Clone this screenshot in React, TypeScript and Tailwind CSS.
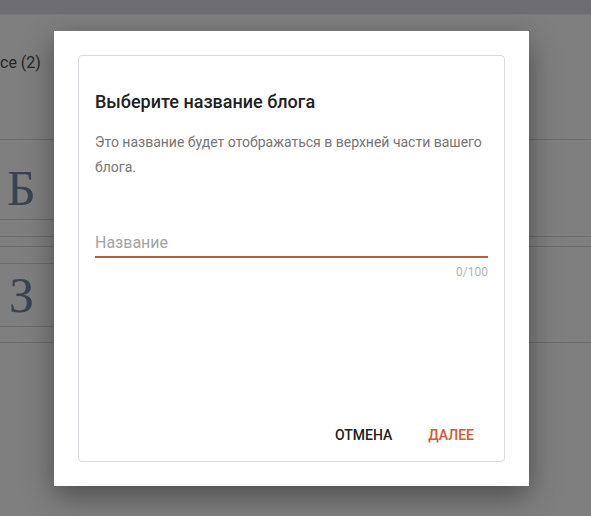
import React from "react";

const roboto = { fontFamily: "Roboto, 'Noto Sans', sans-serif" };

function Backdrop() {
  return (
    <div className="w-full">
      <div className="h-[14px] bg-[#6e6e72]" />
      <div className="h-px bg-[#7a7a7a]" />
      <div className="h-[124px] pt-[38px]">
        <span className="block whitespace-nowrap text-[16px] leading-[20px] text-[#262626]">
          ce (2)
        </span>
      </div>
      <div className="h-[97px] border-t border-[#6c6c6c]">
        <div className="w-[260px] h-[80px] border-b border-[#6c6c6c] pt-[23px] pl-[7px]">
          <span
            className="block text-[50px] leading-[50px] text-[#3a4350]"
            style={{ fontFamily: "'Liberation Serif', serif" }}
          >
            Б
          </span>
        </div>
      </div>
      <div className="h-[10px] border-t border-[#6c6c6c]" />
      <div className="h-[97px] border-t border-b border-[#6c6c6c]">
        <div className="w-[260px] mt-[16px] h-[64px] border-t border-b border-[#6c6c6c] pt-[6px] pl-[9px]">
          <span
            className="block text-[50px] leading-[50px] text-[#3a4350]"
            style={{ fontFamily: "'Liberation Serif', serif" }}
          >
            З
          </span>
        </div>
      </div>
    </div>
  );
}

export default function App() {
  return (
    <div
      className="relative w-[591px] h-[516px] overflow-hidden bg-[#7f7f7f]"
      style={roboto}
    >
      <Backdrop />

      <div className="absolute left-[54px] top-[31px] w-[475px] h-[455px] bg-white p-6 shadow-[0_10px_28px_rgba(0,0,0,0.4)]">
        <div className="h-full flex flex-col border border-[#d9dcdf] rounded px-4 pt-[34px] pb-2">
          <h2 className="text-[18px] leading-6 font-medium text-[#212121]">
            Выберите название блога
          </h2>
          <p className="mt-4 text-[14px] leading-[25px] text-[#757575]">
            Это название будет отображаться в верхней части вашего блога.
          </p>

          <div className="mt-[53px] pb-[3px] border-b-2 border-[#bd5d38]">
            <input
              className="block w-full h-5 text-[16px] leading-5 outline-none placeholder:text-[#a3a3a3] text-[#212121]"
              placeholder="Название"
            />
          </div>
          <div className="mt-[6px] text-right text-[12px] leading-4 text-[#b3b3b3]">
            0/100
          </div>

          <div className="mt-auto flex justify-end gap-2">
            <button className="h-9 px-[14px] text-[14px] font-medium text-[#212121]">
              ОТМЕНА
            </button>
            <button className="h-9 px-[14px] text-[14px] font-medium text-[#d9582b]">
              ДАЛЕЕ
            </button>
          </div>
        </div>
      </div>
    </div>
  );
}
